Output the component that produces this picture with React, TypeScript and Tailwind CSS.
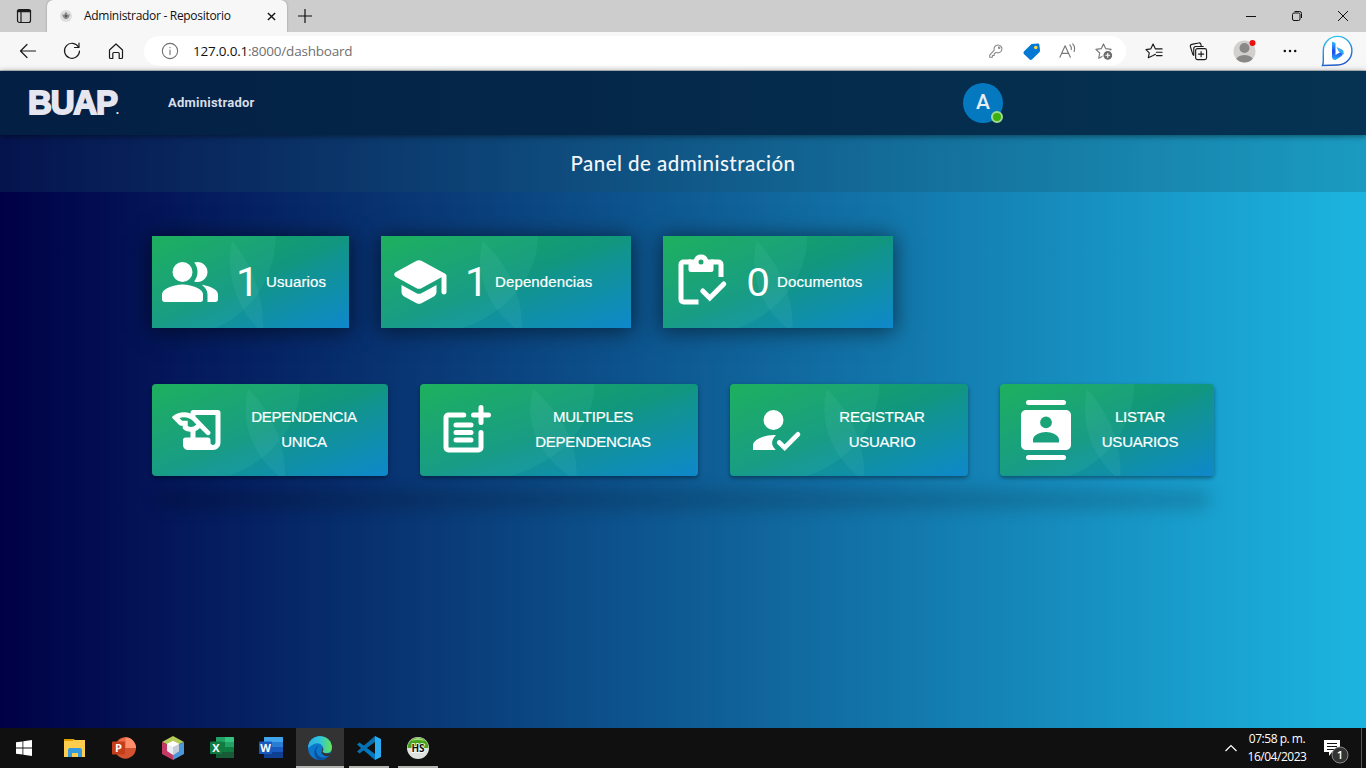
import React from "react";

type Kids = { children: React.ReactNode };

function Glyph({ children, className = "" }: Kids & { className?: string }) {
  return (
    <svg viewBox="0 0 24 24" fill="white" className={`h-[60px] w-[60px] shrink-0 ${className}`}>
      {children}
    </svg>
  );
}

const People = (
  <>
    <path d="M9 13c-2.67 0-8.200 1.340-8.200 4v2c0 .55.45 1 1 1h14.400c.55 0 1-.45 1-1v-2c0-2.660-5.530-4-8.200-4z" />
    <circle cx="9" cy="8" r="4" />
    <path d="M15 12c2.210 0 4-1.790 4-4s-1.790-4-4-4c-.47 0-.91.1-1.330.24C14.500 5.270 15 6.580 15 8s-.5 2.730-1.330 3.760c.42.14.86.24 1.330.24zM16.670 13.130C18.040 14.060 19 15.320 19 17v3h3.200c.55 0 1-.45 1-1v-2c0-2.180-3.770-3.470-6.530-3.870z" />
  </>
);

const School = (
  <path d="M5 13.180v2.810c0 .73.4 1.410 1.040 1.760l5 2.730c.6.33 1.320.33 1.920 0l5-2.730c.64-.35 1.040-1.030 1.040-1.760v-2.810l-6.040 3.300c-.6.33-1.320.33-1.920 0L5 13.180zm6.040-9.660l-8.430 4.600c-.69.38-.69 1.380 0 1.760l8.430 4.600c.6.33 1.320.33 1.920 0L21 10.090V16c0 .55.45 1 1 1s1-.45 1-1V9.590c0-.37-.2-.7-.52-.88l-9.520-5.190c-.6-.32-1.320-.32-1.920 0z" />
);

const Clipboard = (
  <>
    <path d="M8 4H5a1 1 0 0 0-1 1v14a1 1 0 0 0 1 1h6M16 4h3a1 1 0 0 1 1 1v5" fill="none" stroke="white" strokeWidth="2" />
    <path fillRule="evenodd" d="M7 3h2.180a3 3 0 0 1 5.640 0H17v4a1 1 0 0 1-1 1H8a1 1 0 0 1-1-1zM12 3a1 1 0 1 0 0 2 1 1 0 0 0 0-2z" />
    <path d="M12.700 15.600l2.800 2.800 5.600-5.600" fill="none" stroke="white" strokeWidth="2" strokeLinecap="round" />
  </>
);

const HistoryEdu = (
  <path fillRule="evenodd" d="M9 5v.38c-.83-.33-1.720-.5-2.610-.5-1.610 0-3.220.55-4.530 1.660-.25.2-.27.540-.05.760l2.680 2.670c.18.180.43.290.690.290h.7v1.110c.86.860 1.980 1.310 3.110 1.360V15H7c-.55 0-1 .45-1 1v2c0 1.100.9 2 2 2h10c1.660 0 3-1.340 3-3V5c0-.55-.45-1-1-1H10c-.55 0-1 .45-1 1zm-1.110 5.410V8.260H5.610L4.570 7.220a5.070 5.070 0 0 1 1.820-.34c1.340 0 2.590.52 3.540 1.460l1.410 1.410-.2.2a2.700 2.700 0 0 1-1.920.8c-.47 0-.93-.12-1.330-.34zM19 17c0 .55-.45 1-1 1s-1-.45-1-1v-1c0-.55-.45-1-1-1h-5v-2.590c.57-.23 1.100-.57 1.560-1.030l.2-.2 2.530 2.530c.73.730 1.710.290 1.710-.7 0-.16-.06-.32-.18-.43L11 6.620V6h8v11z" />
);

const PostAdd = (
  <path
    d="M11.100 6H5a1 1 0 0 0-1 1v12a1 1 0 0 0 1 1h12a1 1 0 0 0 1-1v-6M8 10h6M8 13h6M8 16h6M18 3v6M15 6h6"
    fill="none" stroke="white" strokeWidth="2" strokeLinecap="round"
  />
);

const PersonCheck = (
  <>
    <circle cx="11" cy="8" r="4" />
    <path d="M12 14.060C11.600 14 11.320 14 11 14c-2.670 0-8.200 1.340-8.200 4.200V20h9.100c-1.400-1.500-2.500-3.300.1-5.940z" />
    <path d="M13.300 17l2.170 2.050 5.300-5.300" fill="none" stroke="white" strokeWidth="1.900" strokeLinecap="round" />
  </>
);

const Contacts = (
  <path fillRule="evenodd" d="M5 0h14a1 1 0 0 1 0 2H5a1 1 0 0 1 0-2zM5 22h14a1 1 0 0 1 0 2H5a1 1 0 0 1 0-2zM4 4h16c1.100 0 2 .9 2 2v12c0 1.100-.9 2-2 2H4c-1.100 0-2-.9-2-2V6c0-1.100.9-2 2-2zm8 2.600a2.350 2.350 0 1 0 0 4.700 2.350 2.350 0 0 0 0-4.700zM17.200 17v-1.100c0-1.900-3-3.100-5.200-3.100s-5.200 1.200-5.200 3.100V17z" />
);

function Art() {
  return (
    <svg viewBox="0 0 250 92" preserveAspectRatio="none" className="absolute inset-0 h-full w-full">
      <defs>
        <linearGradient id="base" x1="0" y1="0" x2="1" y2="1">
          <stop offset="0" stopColor="#17ad52" />
          <stop offset=".5" stopColor="#11967f" />
          <stop offset=".58" stopColor="#119490" />
          <stop offset="1" stopColor="#0f88cc" />
        </linearGradient>
        <clipPath id="lens"><ellipse cx="-20" cy="90" rx="161" ry="130" /></clipPath>
      </defs>
      <rect width="250" height="92" fill="url(#base)" />
      <ellipse cx="33" cy="0" rx="124" ry="100" fill="#50c8b4" fillOpacity=".13" />
      <ellipse cx="219" cy="25" rx="120" ry="95" fill="#8ce6dc" fillOpacity=".08" clipPath="url(#lens)" />
    </svg>
  );
}

function Stat({ icon, n, label, className, iconClass, textClass }: { icon: React.ReactNode; n: string; label: string; className: string; iconClass: string; textClass: string }) {
  return (
    <div className={`relative h-[92px] shadow-[0_2px_20px_2px_rgba(0,0,0,0.5)] ${className}`}>
      <Art />
      <div className="relative flex h-full items-center text-white">
        <Glyph className={iconClass}>{icon}</Glyph>
        <span className={`w-[23px] leading-none ${textClass}`}>{n}</span>
        <span className="ml-[7px] text-[15px] tracking-[0.008em] [-webkit-text-stroke:0.200px_white]">{label}</span>
      </div>
    </div>
  );
}

function Action({ icon, a, b, className, iconClass, textClass }: { icon: React.ReactNode; a: string; b: string; className: string; iconClass: string; textClass: string }) {
  return (
    <button className={`relative h-[92px] overflow-hidden rounded-[4px] shadow-[0_2px_4px_rgba(0,0,0,0.4)] ${className}`}>
      <Art />
      <div className="relative flex h-full items-center text-white">
        <Glyph className={iconClass}>{icon}</Glyph>
        <span className={`pb-[2px] text-center text-[15px] leading-[25px] tracking-[-0.016em] [-webkit-text-stroke:0.200px_white] ${textClass}`}>{a}<br />{b}</span>
      </div>
    </button>
  );
}

function Line({ children, size = 20, className = "" }: Kids & { size?: number; className?: string }) {
  return (
    <svg viewBox="0 0 20 20" width={size} height={size} fill="none" stroke="#1b1b1b" strokeWidth="1.200" strokeLinecap="round" strokeLinejoin="round" className={`shrink-0 ${className}`}>
      {children}
    </svg>
  );
}

function TabStrip() {
  return (
    <div className="flex h-8 items-start bg-[#cdcdcd]">
      <Line size={20} className="mt-[6px] ml-[14px]">
        <rect x="3.500" y="3.500" width="13" height="13" rx="2" /><path d="M4 5h12" strokeWidth="2.400" /><path d="M7 6v10" />
      </Line>
      <div className="ml-[13px] flex h-8 w-[240px] items-center rounded-t-[6px] bg-[#f7f7f7] shadow-[0_0_2px_rgba(0,0,0,0.35)]">
        <svg viewBox="0 0 14 14" className="ml-3 h-[14px] w-[14px]">
          <circle cx="7" cy="7" r="6" fill="#dedede" />
          <path d="M3 5l2 1 1-2 1-1 1 1 1 2 2-1-1 3-2 2H6L4 8z" fill="#8a8a8a" /><path d="M6 6h2v2H6z" fill="#555" />
        </svg>
        <span className="ml-[11px] w-[183px] font-['Open_Sans',sans-serif] text-[12px] tracking-[-0.025em] text-[#111]">Administrador - Repositorio</span>
        <svg viewBox="0 0 10 10" className="h-[9px] w-[9px]" stroke="#111" strokeWidth="1.500"><path d="M1 1l8 8M9 1L1 9" /></svg>
      </div>
      <svg viewBox="0 0 16 16" className="mt-2 ml-[10px] h-4 w-4" stroke="#111" strokeWidth="1.200"><path d="M8 1v14M1 8h14" /></svg>
      <div className="mt-[11px] mr-[18px] ml-auto flex gap-[36px]">
        <svg viewBox="0 0 10 10" className="h-[10px] w-[10px]" stroke="#111"><path d="M0 5.500h10" /></svg>
        <svg viewBox="0 0 10 10" className="h-[10px] w-[10px]" stroke="#111" fill="none"><rect x=".5" y="2" width="7.500" height="7.500" rx="1.500" /><path d="M2.500.5H7.500a2 2 0 0 1 2 2V7" /></svg>
        <svg viewBox="0 0 10 10" className="h-[10px] w-[10px]" stroke="#111"><path d="M0 0l10 10M10 0L0 10" /></svg>
      </div>
    </div>
  );
}

function Toolbar() {
  return (
    <div className="flex h-[39px] items-center border-b border-[#c4c8c8] bg-[#f7f7f7]">
      <Line className="ml-[18px]"><path d="M2.500 10h15M9 3.500L2.500 10 9 16.500" /></Line>
      <Line className="ml-[24px]"><path d="M16.500 6A7.500 7.500 0 1 0 17.500 10M17 2v4.500h-4.500" /></Line>
      <Line className="ml-[24px]"><path d="M3.500 9L10 3l6.500 6v7.500a1 1 0 0 1-1 1h-2.300v-5a1 1 0 0 0-1-1H7.800a1 1 0 0 0-1 1v5H4.500a1 1 0 0 1-1-1z" /></Line>
      <div className="ml-[18px] flex h-[30px] w-[982px] items-center rounded-full bg-white">
        <Line size={18} className="ml-[17px]"><g stroke="#707070"><circle cx="10" cy="10" r="8.500" /><path d="M10 9v5M10 6v.3" /></g></Line>
        <span className="ml-[14px] font-['Open_Sans',sans-serif] text-[13.500px] tracking-[-0.016em] text-[#707070]"><span className="text-[#111]">127.0.0.1</span>:8000/dashboard</span>
        <div className="mr-[13px] ml-auto flex items-center gap-[17px]">
          <Line size={18}><g stroke="#888"><path d="M8 9L3 14.500V17h3v-2h2v-2l2-1.500A4.400 4.400 0 1 0 8 9z" /><circle cx="13.500" cy="6.500" r=".8" /></g></Line>
          <svg viewBox="0 0 20 20" className="h-[19px] w-[19px]"><path d="M10 2l7-.5q1 0 1.200 1L19 9q0 1-.7 1.700L10.500 18.500q-1.200 1-2.400 0L2 12.500q-1-1.200 0-2.400z" fill="#0078d4" /><circle cx="14.500" cy="5.800" r="1.900" fill="#ffd23e" /></svg>
          <Line size={19}><path stroke="#777" d="M2 16L7.500 4 13 16M4 12h7M12.500 3q2 2 1.500 5M15.500 2q3 3 1.500 8" /></Line>
          <svg viewBox="0 0 20 20" className="h-[19px] w-[19px]" fill="none" stroke="#777" strokeWidth="1.200" strokeLinejoin="round"><path d="M10 2l2.400 5 5.600.7-4 3.900 1 5.400-5-2.500L5 17l1-5.400-4-3.900L7.600 7z" /><circle cx="14.500" cy="14" r="5.200" fill="#6b6b6b" stroke="white" /><path d="M12 14h5M14.500 11.500v5" stroke="white" /></svg>
        </div>
      </div>
      <Line className="ml-[19px]" size={19}><path d="M11 13l-3 1.500-4.500 2 1-5L1 8l5-.7L8.500 2 11 7.300h7M12 10.800h6M12 14.300h6" /></Line>
      <Line className="ml-[25px]" size={19}><rect x="7" y="7" width="11.500" height="11.500" rx="2" /><path d="M12.750 10v5.500M10 12.750h5.500M5 14l-1-1L1.500 5Q1 3 3 2.500L10 1q2-.5 2.500 1.500l.5 2M5 14V7q0-2.300 2-2.300h8" /></Line>
      <svg viewBox="0 0 24 24" className="ml-[25px] h-6 w-6">
        <defs><clipPath id="user"><circle cx="11.500" cy="12.500" r="11" /></clipPath></defs>
        <circle cx="11.500" cy="12.500" r="11" fill="#d2d0ce" /><g fill="#8a8886" clipPath="url(#user)"><circle cx="11.500" cy="9" r="5" /><ellipse cx="11.500" cy="22" rx="9" ry="6" /></g><circle cx="19.500" cy="4" r="3" fill="#e81010" />
      </svg>
      <svg viewBox="0 0 16 4" className="ml-[25px] h-1 w-4" fill="#111"><circle cx="2.800" cy="2" r="1.250" /><circle cx="8" cy="2" r="1.250" /><circle cx="13.200" cy="2" r="1.250" /></svg>
      <svg viewBox="0 0 32 32" className="ml-[23px] h-8 w-8">
        <defs>
          <linearGradient id="ring" x1=".3" y1="0" x2=".6" y2="1"><stop stopColor="#2fc5ee" /><stop offset="1" stopColor="#2155c7" /></linearGradient>
          <linearGradient id="bing" x1="0" y1="0" x2="0" y2="1"><stop stopColor="#37bdff" /><stop offset=".55" stopColor="#1b48ef" /><stop offset="1" stopColor="#28b0f5" /></linearGradient>
        </defs>
        <path d="M1.500 30.500q1-2 .8-8V16A14.300 14.300 0 1 1 16.500 30z" fill="white" stroke="url(#ring)" strokeWidth="1.400" />
        <path d="M11 6.500l3.500 1.500v12l7-4q1.500 3-1.500 5.500l-5.500 3.500q-3.500 0-3.500-3.500z" fill="url(#bing)" /><path d="M15.500 12l5.500 2.500q2.500 2 1.500 5l-4.500-2.500z" fill="#35a8f2" />
      </svg>
    </div>
  );
}

const task = "h-6 w-6";
function Taskbar() {
  return (
    <div className="flex h-10 items-stretch bg-[#101010]">
      <div className="flex w-12 items-center justify-center"><svg viewBox="0 0 16 16" className="h-4 w-4" fill="white"><path d="M0 2.300L6.500 1.400v6.200H0zM7.300 1.300L16 0v7.600H7.300zM0 8.400h6.500v6.200L0 13.700zM7.300 8.400H16V16l-8.700-1.300z" /></svg></div>
      <div className="ml-[3px] flex w-12 items-center justify-center"><svg viewBox="0 0 24 24" className={task}><path d="M1 3h9l2 1h10v17H1z" fill="#ffcd4d" /><path d="M1 3h9l1 1-1 1H1z" fill="#e2a000" /><path d="M5 14q0-2 2-2h10q2 0 2 2v7h-4v-4H9v4H5z" fill="#369ade" /></svg></div>
      <div className="ml-px flex w-12 items-center justify-center"><svg viewBox="0 0 24 24" className={task}><circle cx="13.300" cy="12" r="10.700" fill="#d35230" /><path d="M13.300 1.300A10.700 10.700 0 0 1 24 12H13.300z" fill="#ff8f6b" /><path d="M13.300 1.300V12H4A10.700 10.700 0 0 1 13.300 1.300z" fill="#ed6c47" /><rect y="5.500" width="13" height="13" rx="1" fill="#c43e1c" /><text x="6.500" y="16" textAnchor="middle" fill="white" fontSize="11" fontWeight="700" fontFamily="Open Sans">P</text></svg></div>
      <div className="ml-px flex w-12 items-center justify-center"><svg viewBox="0 0 24 24" className={task}><path d="M12 0l11 6-11 5L1 6z" fill="#b5cb59" /><path d="M1 6v12l11 6V11z" fill="#c43a64" /><path d="M23 6v12l-11 6V11z" fill="#4c97d8" /><path d="M12 5l6 3v7l-6 4-6-4V8z" fill="#e7edf2" /><path d="M12 5l6 3-6 3-6-3z" fill="white" /><path d="M12 11l6-3v7l-6 4z" fill="#c6ced9" /></svg></div>
      <div className="ml-px flex w-12 items-center justify-center"><svg viewBox="0 0 24 24" className={task}><rect x="6" y="1" width="18" height="21" rx="1" fill="#107c41" /><path d="M6 2q0-1 1-1h8v5H6z" fill="#21a366" /><path d="M15 1h8q1 0 1 1v4h-9z" fill="#33c481" /><path d="M6 6h9v5H6z" fill="#107c41" /><path d="M15 6h9v5h-9z" fill="#21a366" /><path d="M6 16h18v6H6z" fill="#185c37" /><rect y="5.500" width="12" height="12.500" rx="1" fill="#107c41" /><text x="6" y="15.800" textAnchor="middle" fill="white" fontSize="11" fontWeight="700" fontFamily="Open Sans">X</text></svg></div>
      <div className="ml-px flex w-12 items-center justify-center"><svg viewBox="0 0 24 24" className={task}><rect x="5" y="1" width="19" height="21" rx="1" fill="#2b7cd3" /><path d="M5 2q0-1 1-1h17q1 0 1 1v4H5z" fill="#41a5ee" /><path d="M5 11h19v5H5z" fill="#185abd" /><path d="M5 16h19v6H5z" fill="#103f91" /><rect y="5.500" width="13" height="12.500" rx="1" fill="#185abd" /><text x="6.500" y="15.800" textAnchor="middle" fill="white" fontSize="11" fontWeight="700" fontFamily="Open Sans">W</text></svg></div>
      <div className="ml-px flex w-12 items-center justify-center border-b-2 border-[#b4b4b0] bg-[#333] pt-[2px]">
        <svg viewBox="0 0 24 24" className={task}>
          <defs>
            <linearGradient id="edgeTop"><stop stopColor="#2aaee5" /><stop offset=".5" stopColor="#30c5d8" /><stop offset="1" stopColor="#69e650" /></linearGradient>
            <clipPath id="edgeDisc"><circle cx="12" cy="12" r="12" /></clipPath>
          </defs>
          <g clipPath="url(#edgeDisc)">
            <rect width="24" height="24" fill="#0c78cc" />
            <path d="M0 12Q-1 0 12 0T24 11q0 6.500-6.500 6-4 0-4-1.800 3-2.200.5-5.700Q9.500 4 0 12z" fill="url(#edgeTop)" />
            <path d="M10.500 9.500q-5 5 0 10.500 4.500 4 12-1L18 25 10 24Q5.500 20 6.500 15q1-4.500 4-5.500z" fill="#0c4f9e" />
            <path d="M13.500 15.200q1.500-1.700.8-4.200 2 2 .2 5 3.500 2.500 8.500.5v3q-4 1.500-7 0-3-1.800-2.500-4.300z" fill="#333" />
          </g>
        </svg>
      </div>
      <div className="ml-[5px] flex w-10 items-center justify-center border-b-2 border-[#b4b4b0] pt-[2px]"><svg viewBox="0 0 24 24" className={task}><path d="M0 8.500L2.500 6.500 18 18v6z" fill="#0078bd" /><path d="M0 15.500l2.500 2L18 6V0z" fill="#0870b0" /><path d="M18 0l6 3v18l-6 3z" fill="#2aabf2" /></svg></div>
      <div className="ml-[9px] flex w-10 items-center justify-center border-b-2 border-[#b4b4b0] pt-[2px]"><svg viewBox="0 0 24 24" className={task}><circle cx="12" cy="12" r="11" fill="#dfe3df" /><path d="M1.500 12a10.500 10.500 0 0 1 21 0z" fill="#4aa51e" /><path d="M5 5q7-6 14 0-7-2-14 0z" fill="#a8dc78" /><text x="12" y="15.500" textAnchor="middle" fontSize="10" fontWeight="700" fontFamily="Open Sans" stroke="white" strokeWidth="1.500" paintOrder="stroke" fill="#111">HS</text></svg></div>
      <svg viewBox="0 0 12 8" className="mt-4 ml-auto h-2 w-3" fill="none" stroke="white" strokeWidth="1.200"><path d="M.5 7L6 1.500 11.500 7" /></svg>
      <div className="ml-[10px] w-[60px] pt-[2px] text-center font-['Open_Sans',sans-serif] text-[12px] leading-[18px] tracking-[-0.04em] whitespace-nowrap text-white">07:58 p. m.<br />16/04/2023</div>
      <svg viewBox="0 0 26 26" className="mt-[11px] ml-[17px] h-[26px] w-[26px]"><path d="M0 1h16v12H8l-3 4v-4H0z" fill="white" /><path d="M3 4.500h10M3 7.500h10M3 10.500h8" stroke="#101010" /><circle cx="16" cy="16" r="8" fill="#333" stroke="#888" /><text x="16" y="20" textAnchor="middle" fill="white" fontSize="11.500" fontWeight="600" fontFamily="Open Sans">1</text></svg>
      <div className="mr-[4px] ml-[11px] w-px bg-[#555]" />
    </div>
  );
}

export default function App() {
  return (
    <div className="flex h-[768px] w-[1366px] flex-col overflow-hidden font-['Liberation_Sans',Arial,sans-serif]">
      <TabStrip />
      <Toolbar />
      <main className="flex-1 bg-linear-to-r/srgb from-[#000046] to-[#1cb5e0]">
        <header className="relative flex h-16 items-center bg-linear-to-r/srgb from-[#031f43] to-[#063352] shadow-[0_1px_6px_rgba(0,0,0,0.5)]">
          <div className="ml-[28px] flex w-[140px] items-end pb-px text-[33px] leading-[38px] font-bold tracking-[-1.200px] text-[#e6e6f0] [-webkit-text-stroke:1.800px_#e6e6f0]">
            BUAP<span className="-ml-px text-[12px] leading-[24px] [-webkit-text-stroke:0]">.</span>
          </div>
          <span className="w-[795px] font-[Roboto,sans-serif] text-[13px] font-bold tracking-[0.018em] text-[#d8dee6]">Administrador</span>
          <div className="relative flex h-10 w-10 items-center justify-center rounded-full bg-[#0579bf] font-[Roboto,sans-serif] text-[21px] font-medium text-[#e6eef8]">
            A
            <span className="absolute right-0 bottom-0 h-3 w-3 rounded-full border-2 border-[#9fdc8d] bg-[#3caf13]" />
          </div>
        </header>
        <div className="flex h-[57px] items-center justify-center bg-[rgba(25,80,100,0.25)]">
          <h1 className="pb-px font-[Lato,sans-serif] text-[20.500px] font-medium tracking-[0.023em] text-[#f2f6fa]">Panel de administración</h1>
        </div>
        <section className="mt-[44px] ml-[152px] flex gap-8">
          <Stat icon={People} n="1" label="Usuarios" className="w-[197px]" iconClass="ml-2" textClass="ml-4 font-[Roboto,sans-serif] text-[41px]" />
          <Stat icon={School} n="1" label="Dependencias" className="w-[250px]" iconClass="ml-2" textClass="ml-4 font-[Roboto,sans-serif] text-[41px]" />
          <Stat icon={Clipboard} n="0" label="Documentos" className="w-[230px]" iconClass="ml-2" textClass="ml-4 text-[40px]" />
        </section>
        <section className="mt-[56px] ml-[152px] w-[1062px]">
          <div className="flex gap-8">
            <Action icon={HistoryEdu} a="DEPENDENCIA" b="UNICA" className="w-[236px]" iconClass="ml-4" textClass="ml-[16px] w-[120px]" />
            <Action icon={PostAdd} a="MULTIPLES" b="DEPENDENCIAS" className="w-[278px]" iconClass="ml-4" textClass="ml-[32px] w-[130px]" />
            <Action icon={PersonCheck} a="REGISTRAR" b="USUARIO" className="w-[238px]" iconClass="ml-4" textClass="ml-[26px] w-[100px]" />
            <Action icon={Contacts} a="LISTAR" b="USUARIOS" className="w-[214px]" iconClass="ml-4" textClass="ml-[14px] w-[100px]" />
          </div>
          <div className="mx-1 mt-[14px] h-[19px] rounded-full bg-black/15 blur-[8px]" />
        </section>
      </main>
      <Taskbar />
    </div>
  );
}
